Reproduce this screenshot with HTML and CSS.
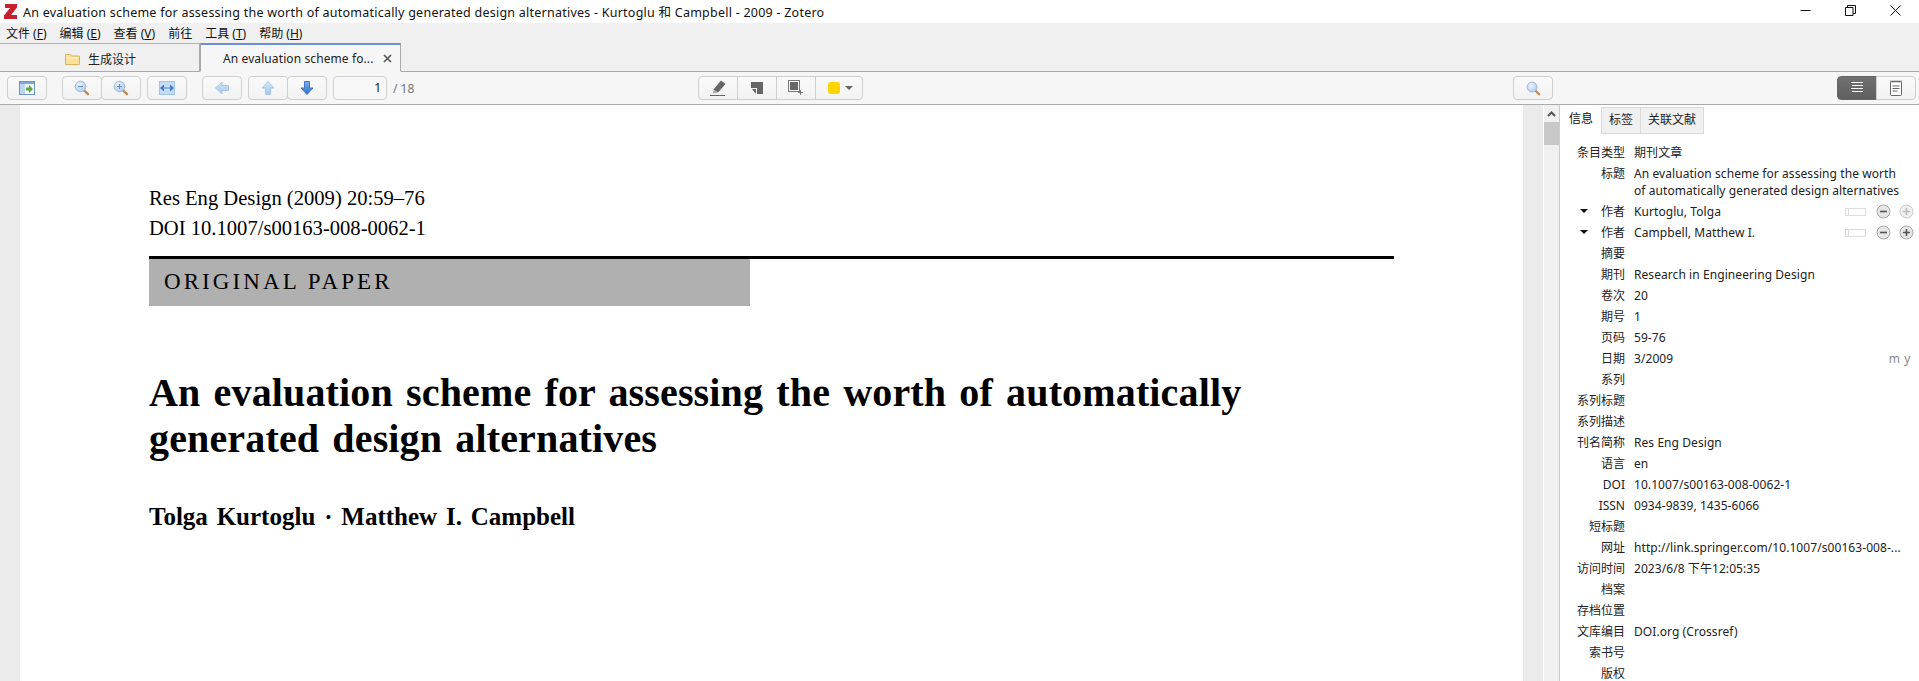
FILE: index.html
```html
<!DOCTYPE html>
<html lang="zh-CN">

<head>
    <meta charset="UTF-8">
    <title>Zotero</title>
    <link rel="stylesheet" href="styles.css">
</head>

<body>
    <svg class="defs" width="0" height="0">
        <defs>
            <radialGradient id="lens" cx="40%" cy="35%" r="70%">
                <stop offset="0" stop-color="#eef6ff" />
                <stop offset="1" stop-color="#a9c9ee" />
            </radialGradient>
            <linearGradient id="arrowPale" x1="0" y1="0" x2="0" y2="1">
                <stop offset="0" stop-color="#d5e6f8" />
                <stop offset="1" stop-color="#a8c8ec" />
            </linearGradient>
            <linearGradient id="arrowDark" x1="0" y1="0" x2="0" y2="1">
                <stop offset="0" stop-color="#7fb0ea" />
                <stop offset="1" stop-color="#2f6fc8" />
            </linearGradient>
            <symbol id="glass" viewBox="0 0 16 16">
                <path d="M9.600 9.800l4.400 4.400" stroke="#c08a50" stroke-width="2.400" stroke-linecap="round" />
                <circle cx="6.500" cy="6.500" r="5.300" fill="url(#lens)" stroke="#9db8d6" />
            </symbol>
        </defs>
    </svg>

    <!-- 标题栏 -->
    <div class="titlebar">
        <svg class="logo" viewBox="0 0 13 15" width="13" height="15">
            <polygon points="1,0 13,0 13,3.500 7,11 13,11 13,15 0,15 0,11.500 6,4 1,4" fill="#c8202c" />
        </svg>
        <span class="wintitle">An evaluation scheme for assessing the worth of automatically generated design alternatives - Kurtoglu 和 Campbell - 2009 - Zotero</span>
        <div class="winctl">
            <svg width="11" height="11" viewBox="0 0 11 11"><path d="M0.500 5.500h10" stroke="#111" /></svg>
            <svg width="11" height="11" viewBox="0 0 11 11"><path d="M0.500 2.500h7.500v8h-7.500zM2.500 2.500v-2h8v8h-2.500" fill="none" stroke="#111" /></svg>
            <svg width="11" height="11" viewBox="0 0 11 11"><path d="M0.500 0.500l10 10M10.500 0.500l-10 10" stroke="#111" /></svg>
        </div>
    </div>

    <!-- 菜单 -->
    <div class="menubar">
        <span>文件 (<u>F</u>)</span>
        <span>编辑 (<u>E</u>)</span>
        <span>查看 (<u>V</u>)</span>
        <span>前往</span>
        <span>工具 (<u>T</u>)</span>
        <span>帮助 (<u>H</u>)</span>
    </div>

    <!-- 标签页 -->
    <div class="tabbar">
        <div class="tab">
            <svg width="15" height="12" viewBox="0 0 15 12">
                <path d="M0.500 1.500h5l1 1.500h8v8.500h-14z" fill="#fbe29a" stroke="#d9b45c" />
                <path d="M1.500 5h12" stroke="#fff3c8" />
            </svg>
            <span>生成设计</span>
        </div>
        <div class="tab tab-on">
            <span>An evaluation scheme fo...</span>
            <svg class="tabclose" width="9" height="9" viewBox="0 0 9 9"><path d="M1 1l7 7M8 1l-7 7" stroke="#555" stroke-width="1.600" /></svg>
        </div>
    </div>

    <!-- 工具栏 -->
    <div class="toolbar">
        <button class="btn">
            <svg width="16" height="14" viewBox="0 0 16 14">
                <rect x="0.500" y="0.500" width="15" height="13" fill="#f4f8fc" stroke="#6f94c4" />
                <rect x="1" y="1" width="14" height="2" fill="#7ea7d8" />
                <rect x="1" y="3" width="5" height="10" fill="#bcd6ee" />
                <path d="M7 6h3v-2.500l4 4-4 4v-2.500h-3z" transform="translate(0 .5)" fill="#5aa83c" />
            </svg>
        </button>
        <div class="group g-zoom">
            <button class="btn"><svg width="16" height="16"><use href="#glass" /><path d="M4 6.500h5" stroke="#6a8fbe" stroke-width="1.200" /></svg></button>
            <button class="btn"><svg width="16" height="16"><use href="#glass" /><path d="M4 6.500h5M6.500 4v5" stroke="#6a8fbe" stroke-width="1.200" /></svg></button>
        </div>
        <button class="btn g-fit">
            <svg width="16" height="14" viewBox="0 0 16 14">
                <rect x="0.500" y="0.500" width="15" height="13" fill="#c5dcf7" stroke="#a5c3e6" />
                <path d="M1 7l4-3.500v2.500h6v-2.500l4 3.500-4 3.500v-2.500h-6v2.500z" fill="#3f78c8" />
                <path d="M4.500 7h7" stroke="#dcebfb" />
            </svg>
        </button>
        <button class="btn g-prev">
            <svg width="14" height="14" viewBox="0 0 14 14"><path d="M0.500 7l6.500-6v3.500h6.500v5h-6.500v3.500z" fill="url(#arrowPale)" stroke="#a8c6e8" /></svg>
        </button>
        <div class="group g-page">
            <button class="btn">
                <svg width="14" height="14" viewBox="0 0 14 14"><path d="M7 0.500l6 6.500h-3.500v6.500h-5v-6.500h-3.500z" fill="url(#arrowPale)" stroke="#a8c6e8" /></svg>
            </button>
            <button class="btn">
                <svg width="14" height="14" viewBox="0 0 14 14"><path d="M7 13.500l6-6.500h-3.500v-6.500h-5v6.500h-3.500z" fill="url(#arrowDark)" stroke="#3f78c8" /></svg>
            </button>
        </div>
        <div class="pagenum">1</div>
        <span class="pagecount">/ 18</span>

        <div class="group g-annot">
            <button class="btn">
                <svg width="16" height="17" viewBox="0 0 16 17">
                    <path d="M11 .5l4.500 3.500-7.500 8.500-4.500-3z" fill="#666" />
                    <path d="M3.500 9.500l4.500 3-5 1z" fill="#aaa" />
                    <path d="M0 15.500h15" stroke="#666" />
                </svg>
            </button>
            <button class="btn">
                <svg width="12" height="12" viewBox="0 0 12 12"><path d="M0 0h12v12h-6v-6h-6z" fill="#666" /><path d="M1 7h4v5z" fill="#666" /></svg>
            </button>
            <button class="btn">
                <svg width="16" height="16" viewBox="0 0 16 16">
                    <rect x="0.500" y="0.500" width="11" height="11" fill="none" stroke="#777" />
                    <rect x="2" y="2" width="8" height="8" fill="#666" />
                    <path d="M12.500 10v5M10 12.500h5" stroke="#777" />
                </svg>
            </button>
            <button class="btn btn-color"><span class="swatch"></span><span class="caret"></span></button>
        </div>

        <button class="btn g-search"><svg width="15" height="15" viewBox="0 0 16 16"><use href="#glass" /></svg></button>

        <div class="group g-view">
            <button class="btn btn-dark">
                <svg width="13" height="12" viewBox="0 0 13 12"><path d="M0 .5h12M1 3.500h11M0 6.500h12M1 9.500h11" stroke="#fff" /></svg>
            </button>
            <button class="btn">
                <svg width="14" height="16" viewBox="0 0 14 16">
                    <rect x="1.500" y="1.500" width="11" height="14" rx="1" fill="#fff" stroke="#666" />
                    <path d="M2 .5v2M4 .5v2M6 .5v2M8 .5v2M10 .5v2M12 .5v2M3.500 6h7M3.500 8.500h7M3.500 11h5" stroke="#666" />
                </svg>
            </button>
        </div>
    </div>

    <div class="main">
        <!-- PDF 页面 -->
        <div class="viewer">
            <div class="page">
                <p class="cite">Res Eng Design (2009) 20:59–76</p>
                <p class="cite">DOI 10.1007/s00163-008-0062-1</p>
                <div class="rule"></div>
                <div class="papertype">ORIGINAL PAPER</div>
                <h1>An evaluation scheme for assessing the worth of automatically<br>generated design alternatives</h1>
                <p class="authors">Tolga Kurtoglu · Matthew I. Campbell</p>
            </div>
        </div>
        <div class="scroll">
            <div class="scroll-up"><svg width="9" height="6" viewBox="0 0 9 6"><path d="M1 5l3.500-3.500 3.500 3.500" fill="none" stroke="#555" stroke-width="2" /></svg></div>
            <div class="scroll-thumb"></div>
        </div>

        <!-- 条目信息 -->
        <div class="side">
            <div class="sidetabs">
                <span class="stab stab-on">信息</span>
                <span class="stab">标签</span>
                <span class="stab">关联文献</span>
            </div>
            <div class="fields">
                <div class="row"><label>条目类型</label><span>期刊文章</span></div>
                <div class="row"><label>标题</label><span>An evaluation scheme for assessing the worth<br>of automatically generated design alternatives</span></div>
                <div class="row"><i class="twisty"></i><label>作者</label><span>Kurtoglu, Tolga</span>
                    <div class="creator">
                        <b class="mode"></b>
                        <svg width="15" height="15" viewBox="0 0 15 15"><circle cx="7.500" cy="7.500" r="6.500" fill="#e6e6e6" stroke="#aaa" /><path d="M4 7.500h7" stroke="#555" stroke-width="1.600" /></svg>
                        <svg class="faded" width="15" height="15" viewBox="0 0 15 15"><circle cx="7.500" cy="7.500" r="6.500" fill="#efefef" stroke="#ccc" /><path d="M4 7.500h7M7.500 4v7" stroke="#bbb" stroke-width="1.600" /></svg>
                    </div>
                </div>
                <div class="row"><i class="twisty"></i><label>作者</label><span>Campbell, Matthew I.</span>
                    <div class="creator">
                        <b class="mode"></b>
                        <svg width="15" height="15" viewBox="0 0 15 15"><circle cx="7.500" cy="7.500" r="6.500" fill="#e6e6e6" stroke="#aaa" /><path d="M4 7.500h7" stroke="#555" stroke-width="1.600" /></svg>
                        <svg width="15" height="15" viewBox="0 0 15 15"><circle cx="7.500" cy="7.500" r="6.500" fill="#e6e6e6" stroke="#aaa" /><path d="M4 7.500h7M7.500 4v7" stroke="#555" stroke-width="1.600" /></svg>
                    </div>
                </div>
                <div class="row"><label>摘要</label><span></span></div>
                <div class="row"><label>期刊</label><span>Research in Engineering Design</span></div>
                <div class="row"><label>卷次</label><span>20</span></div>
                <div class="row"><label>期号</label><span>1</span></div>
                <div class="row"><label>页码</label><span>59-76</span></div>
                <div class="row"><label>日期</label><span>3/2009</span><em class="dateorder">m y</em></div>
                <div class="row"><label>系列</label><span></span></div>
                <div class="row"><label>系列标题</label><span></span></div>
                <div class="row"><label>系列描述</label><span></span></div>
                <div class="row"><label>刊名简称</label><span>Res Eng Design</span></div>
                <div class="row"><label>语言</label><span>en</span></div>
                <div class="row"><label>DOI</label><span>10.1007/s00163-008-0062-1</span></div>
                <div class="row"><label>ISSN</label><span>0934-9839, 1435-6066</span></div>
                <div class="row"><label>短标题</label><span></span></div>
                <div class="row"><label>网址</label><span>http://link.springer.com/10.1007/s00163-008-...</span></div>
                <div class="row"><label>访问时间</label><span>2023/6/8 下午12:05:35</span></div>
                <div class="row"><label>档案</label><span></span></div>
                <div class="row"><label>存档位置</label><span></span></div>
                <div class="row"><label>文库编目</label><span>DOI.org (Crossref)</span></div>
                <div class="row"><label>索书号</label><span></span></div>
                <div class="row"><label>版权</label><span></span></div>
            </div>
        </div>
    </div>
</body>

</html>
```

FILE: styles.css
```css
* {
    box-sizing: border-box;
}

html,
body {
    margin: 0;
    height: 681px;
    overflow: hidden;
}

body {
    display: flex;
    flex-direction: column;
    background: #fff;
    color: #222;
    font-family: "Noto Sans", "Noto Sans CJK SC", sans-serif;
    font-size: 12px;
}

.defs {
    position: absolute;
}

.titlebar {
    height: 23px;
    flex: none;
    display: flex;
    align-items: center;
    padding-left: 4px;
    background: #fff;
}

.logo {
    margin-right: 6px;
}

.wintitle {
    color: #111;
    font-size: 12.500px;
    letter-spacing: 0.240px;
}

.winctl {
    margin-left: auto;
    display: flex;
    gap: 34px;
    padding-right: 18px;
    margin-top: -3px;
}

.menubar {
    height: 20px;
    flex: none;
    display: flex;
    gap: 13px;
    align-items: center;
    padding-left: 6px;
    padding-bottom: 1px;
    background: #f0f0f0;
    color: #111;
}

.menubar u {
    text-underline-offset: 1px;
}

.tabbar {
    height: 29px;
    flex: none;
    display: flex;
    background: #f0f0f0;
    border-bottom: 1px solid #aaa;
}

.tab {
    width: 200px;
    height: 29px;
    display: flex;
    align-items: center;
    justify-content: center;
    gap: 8px;
    padding-left: 2px;
    padding-top: 1px;
    border-top: 1px solid #b5b5b5;
    border-right: 1px solid #aaa;
    color: #222;
}

.tab-on {
    width: 201px;
    justify-content: flex-start;
    padding-left: 22px;
    gap: 10px;
    background: #f6f6f6;
    border-top: 2px solid #6b8fd2;
    border-left: 1px solid #aaa;
    border-bottom: 1px solid #f6f6f6;
    letter-spacing: 0.100px;
}

.toolbar {
    height: 33px;
    flex: none;
    display: flex;
    align-items: center;
    padding-left: 7px;
    background: #f6f6f6;
    border-bottom: 1px solid #aaa;
}

.btn {
    width: 40px;
    height: 24px;
    padding: 0;
    display: flex;
    align-items: center;
    justify-content: center;
    background: linear-gradient(#fafafa, #f2f2f2);
    border: 1px solid #cfcfcf;
    border-radius: 4px;
}

.group {
    display: flex;
}

.group .btn + .btn {
    margin-left: -1px;
}

.g-zoom {
    margin-left: 15px;
}

.g-fit {
    margin-left: 6px;
}

.g-prev {
    margin-left: 15px;
}

.g-page {
    margin-left: 6px;
}

.pagenum {
    width: 54px;
    height: 24px;
    margin-left: 6px;
    padding-right: 5px;
    text-align: right;
    line-height: 22px;
    background: #f8f8f8;
    border: 1px solid #cfcfcf;
    border-radius: 4px;
}

.pagecount {
    margin-left: 6px;
    color: #777;
}

.g-annot {
    margin-left: 284px;
}

.g-annot .btn {
    border-radius: 0;
}

.g-annot .btn:first-child {
    border-radius: 4px 0 0 4px;
}

.g-annot .btn:last-child {
    width: 48px;
    gap: 5px;
    padding-left: 2px;
    border-radius: 0 4px 4px 0;
}

.swatch {
    width: 12px;
    height: 12px;
    border-radius: 3px;
    background: #ffd400;
}

.caret {
    border: 4px solid transparent;
    border-top: 4px solid #666;
    border-bottom: 0;
}

.g-search {
    margin-left: 650px;
}

.g-view {
    margin-left: 284px;
}

.g-view .btn:first-child {
    border-radius: 4px 0 0 4px;
}

.g-view .btn:last-child {
    border-radius: 0 4px 4px 0;
}

.btn-dark {
    background: linear-gradient(#707070, #606060);
    border-color: #666;
}

.main {
    flex: 1;
    min-height: 0;
    display: flex;
}

.viewer {
    width: 1543px;
    padding-left: 20px;
    padding-right: 20px;
    background: #ebebeb;
}

.page {
    height: 100%;
    padding-left: 129px;
    padding-right: 129px;
    padding-top: 78px;
    background: #fff;
    color: #000;
    font-family: "Liberation Serif", serif;
}

.cite {
    margin: 0;
    font-size: 20.600px;
    line-height: 30px;
}

.rule {
    height: 3px;
    margin-top: 13px;
    background: #000;
}

.papertype {
    width: 601px;
    height: 47px;
    padding-left: 15px;
    background: #b0b0b0;
    font-size: 23px;
    letter-spacing: 3.080px;
    line-height: 45px;
}

h1 {
    margin: 0;
    margin-top: 64px;
    font-size: 40px;
    line-height: 46px;
    letter-spacing: 0.150px;
    word-spacing: 3px;
}

.authors {
    margin: 0;
    margin-top: 41px;
    font-size: 25px;
    font-weight: bold;
    word-spacing: 2.600px;
}

.scroll {
    width: 17px;
    background: #f0f0f0;
    border-left: 1px solid #fff;
    border-right: 1px solid #ccc;
}

.scroll-up {
    height: 17px;
    display: flex;
    align-items: center;
    justify-content: center;
}

.scroll-thumb {
    height: 23px;
    background: #c8c8c8;
}

.side {
    flex: 1;
    min-width: 0;
    padding-top: 2px;
}

.sidetabs {
    height: 27px;
    display: flex;
    padding-left: 1px;
}

.stab {
    padding: 0 7px;
    line-height: 24px;
    background: #f0f0f0;
    border: 1px solid #d9d9d9;
    border-left: 0;
}

.stab-on {
    padding: 0 8px;
    background: #fff;
    border: 0;
    border-right: 1px solid #d9d9d9;
    color: #111;
}

.fields {
    padding-top: 8px;
}

.row {
    position: relative;
    display: flex;
    gap: 9px;
    padding: 2px 0;
    line-height: 17px;
    letter-spacing: 0.070px;
}

.row label {
    width: 65px;
    flex: none;
    text-align: right;
    letter-spacing: 0;
}

.twisty {
    position: absolute;
    left: 20px;
    top: 8px;
    border: 4px solid transparent;
    border-top: 4px solid #111;
    border-bottom: 0;
}

.creator {
    position: absolute;
    right: 5px;
    top: 3px;
    display: flex;
    align-items: center;
    gap: 8px;
}

.mode {
    width: 21px;
    height: 8px;
    margin-right: 2px;
    background: linear-gradient(90deg, #fdfdfd 2px, #ddd 2px, #ddd 3px, #fdfdfd 3px);
    border: 1px solid #ddd;
}

.dateorder {
    position: absolute;
    right: 8px;
    top: 2px;
    font-style: normal;
    color: #888;
    letter-spacing: 0.600px;
}
```
